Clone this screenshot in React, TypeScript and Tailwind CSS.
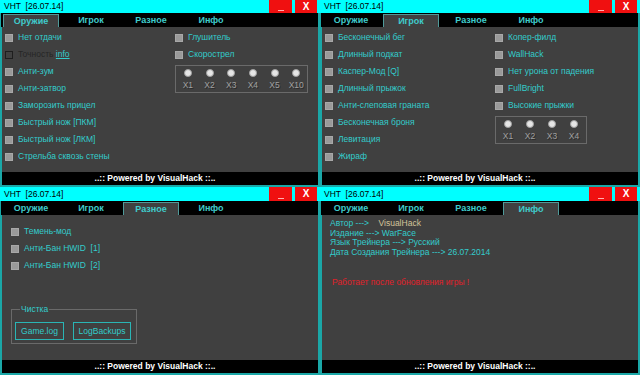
import React from "react";

const TEAL = "text-[#33cccc]";

function TitleBar({ h }: { h: string }) {
  return (
    <div className={`${h} bg-[#00ffff] flex items-stretch shrink-0`}>
      <div className="flex-1 pl-[4px] flex items-center text-[8.5px] leading-none text-black whitespace-pre">
        VHT  [26.07.14]
      </div>
      <div className="w-[23px] bg-[#f01010] flex items-end justify-center pb-[2px]">
        <div className="w-[6px] h-[1px] bg-[#ffb0b0]" />
      </div>
      <div className="w-[3px]" />
      <div className="w-[22px] bg-[#f01010] flex items-center justify-center text-white font-bold text-[10px] leading-none">
        X
      </div>
      <div className="w-[3px]" />
    </div>
  );
}

const TABS = ["Оружие", "Игрок", "Разное", "Инфо"];

function TabBar({ active }: { active: number }) {
  return (
    <div className="h-[14px] bg-black flex ml-[-1px] shrink-0">
      {TABS.map((t, i) => (
        <div key={t} className="w-[60px] h-full pt-[1px] pl-[2px] pr-[2px]">
          <div
            className={
              i === active
                ? "h-full bg-[#404040] border-t border-x border-[#4f9a9a] flex items-center justify-center text-[9px] font-bold leading-none text-[#3fcccc]"
                : "h-full flex items-center justify-center text-[9px] font-bold leading-none text-[#3fcccc]"
            }
          >
            {t}
          </div>
        </div>
      ))}
    </div>
  );
}

function Footer() {
  return (
    <div className="h-[13px] bg-black flex items-center justify-center pr-[10px] text-white font-bold text-[8.5px] leading-none shrink-0 whitespace-pre">
      ..:: Powered by VisualHack ::..
    </div>
  );
}

function Check({ label, disabled, info }: { label: string; disabled?: boolean; info?: boolean }) {
  return (
    <div className="h-[17px] flex items-center gap-[5px] whitespace-pre">
      {disabled ? (
        <div className="w-[8px] h-[8px] border border-[#1e1e1e] shrink-0" />
      ) : (
        <div className="w-[8px] h-[8px] bg-[#9a9a9a] border border-[#a8a8a8] shrink-0" />
      )}
      <span className={`text-[8.5px] leading-none ${disabled ? "text-[#262626]" : TEAL}`}>
        {label}
        {info && <span className="text-[#33cccc] underline">info</span>}
      </span>
    </div>
  );
}

function RadioBox({ labels, w }: { labels: string[]; w: string }) {
  return (
    <div className={`${w} h-[28px] border border-[#6a6a6a] flex pl-[1px] pt-[3px]`}>
      {labels.map((l) => (
        <div key={l} className="w-[22px] flex flex-col items-center">
          <div className="w-[8px] h-[8px] rounded-full bg-[#e6e6e6] border border-[#a0a0a0]" />
          <div className="mt-[3px] text-[8.5px] leading-[10px] text-[#a0a0a0] [text-shadow:1px_1px_0_#2a2a2a]">
            {l}
          </div>
        </div>
      ))}
    </div>
  );
}

function Panel({
  active,
  h,
  titleH,
  children,
}: {
  active: number;
  h: string;
  titleH: string;
  children: React.ReactNode;
}) {
  return (
    <div className={`w-[320px] ${h} flex flex-col bg-[#1aa7a7]`}>
      <TitleBar h={titleH} />
      <div className="flex-1 flex flex-col mx-[2px] mb-[2px] min-h-0">
        <TabBar active={active} />
        <div className="flex-1 bg-[#404040] min-h-0">{children}</div>
        <Footer />
      </div>
    </div>
  );
}

export default function App() {
  return (
    <div
      className="w-[640px] h-[375px] grid grid-cols-[320px_320px] grid-rows-[187px_188px] bg-black overflow-hidden"
      style={{ fontFamily: '"Liberation Sans", Arial, sans-serif' }}
    >
      <Panel active={0} h="h-[187px]" titleH="h-[13px]">
        <div className="grid grid-cols-[170px_1fr] pl-[3px] pt-[2px]">
          <div className="flex flex-col">
            <Check label="Нет отдачи" />
            <Check label="Точность " disabled info />
            <Check label="Анти-зум" />
            <Check label="Анти-затвор" />
            <Check label="Заморозить прицел" />
            <Check label="Быстрый нож [ПКМ]" />
            <Check label="Быстрый нож [ЛКМ]" />
            <Check label="Стрельба сквозь стены" />
          </div>
          <div className="flex flex-col">
            <Check label="Глушитель" />
            <Check label="Скорострел" />
            <div className="mt-[2px]">
              <RadioBox w="w-[133px]" labels={["X1", "X2", "X3", "X4", "X5", "X10"]} />
            </div>
          </div>
        </div>
      </Panel>
      <Panel active={1} h="h-[187px]" titleH="h-[13px]">
        <div className="grid grid-cols-[170px_1fr] pl-[3px] pt-[2px]">
          <div className="flex flex-col">
            <Check label="Бесконечный бег" />
            <Check label="Длинный подкат" />
            <Check label="Каспер-Мод [Q]" />
            <Check label="Длинный прыжок" />
            <Check label="Анти-слеповая граната" />
            <Check label="Бесконечная броня" />
            <Check label="Левитация" />
            <Check label="Жираф" />
          </div>
          <div className="flex flex-col">
            <Check label="Копер-филд" />
            <Check label="WallHack" />
            <Check label="Нет урона от падения" />
            <Check label="FullBright" />
            <Check label="Высокие прыжки" />
            <div className="mt-[2px]">
              <RadioBox w="w-[92px]" labels={["X1", "X2", "X3", "X4"]} />
            </div>
          </div>
        </div>
      </Panel>
      <Panel active={2} h="h-[188px]" titleH="h-[14px]">
        <div className="flex flex-col pl-[9px] pt-[8px]">
          <Check label="Темень-мод" />
          <Check label="Анти-Бан HWID  [1]" />
          <Check label="Анти-Бан HWID  [2]" />
          <fieldset className="mt-[30px] w-[126px] border border-[#6a6a6a] pl-[3px] pb-[3px] pt-[8px] flex gap-[9px]">
            <legend className="ml-[5px] px-[1px] text-[8.5px] leading-[10px] text-[#33cccc]">Чистка</legend>
            <div className="flex gap-[9px]">
              <div className="w-[49px] h-[18px] border border-[#2ab5b5] flex items-center justify-center text-[8.5px] leading-none text-[#33cccc]">
                Game.log
              </div>
              <div className="w-[58px] h-[18px] border border-[#2ab5b5] flex items-center justify-center text-[8.5px] leading-none text-[#33cccc]">
                LogBackups
              </div>
            </div>
          </fieldset>
        </div>
      </Panel>
      <Panel active={3} h="h-[188px]" titleH="h-[14px]">
        <div className="flex flex-col pl-[8px] pt-[4px] text-[8.5px] leading-[9.7px] text-[#33cccc] whitespace-pre">
          <div>
            Автор ---&gt;    <span className="text-[#d2c49a]">VisualHack</span>
          </div>
          <div>Издание ---&gt; WarFace</div>
          <div>Язык Трейнера ---&gt; Русский</div>
          <div>Дата Создания Трейнера ---&gt; 26.07.2014</div>
          <div className="mt-[20px] pl-[2px] text-[8.5px] text-[#e0202a]">Работает после обновления игры !</div>
        </div>
      </Panel>
    </div>
  );
}
